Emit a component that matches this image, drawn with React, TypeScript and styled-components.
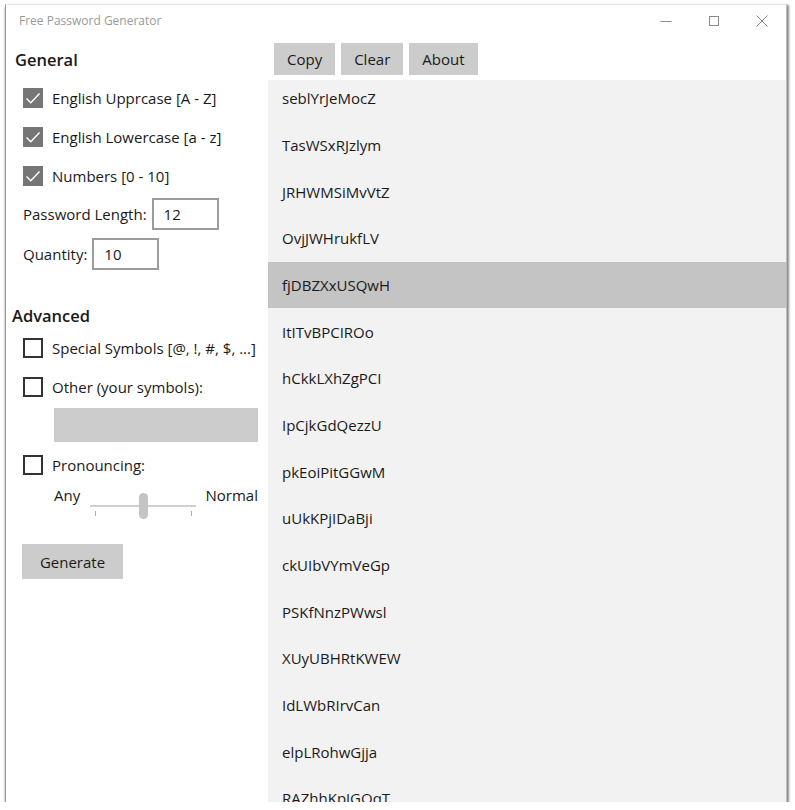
import React from "react";
import styled, { createGlobalStyle } from "styled-components";

const Global = createGlobalStyle`
  html, body { margin: 0; padding: 0; background: #ffffff; }
  body { font-family: "Open Sans", "Noto Sans", Arial, sans-serif; color: #1a1a1a; }
  * { box-sizing: border-box; }
`;

const Window = styled.div`
  margin: 4px 0 0 5px;
  width: 781px;
  height: 798px;
  background: #ffffff;
  border-left: 1px solid #9a9a9a;
  border-top: 1px solid #e6e6e6;
  box-shadow: 1px 0 0 #bdbdbd, 3px 1px 2px rgba(0,0,0,0.45), 0 3px 2px rgba(0,0,0,0.45);
  display: flex;
  flex-direction: column;
  overflow: hidden;
`;

const TitleBar = styled.div`
  height: 31px;
  display: flex;
  align-items: center;
  padding-left: 13px;
  flex-shrink: 0;
`;

const Title = styled.div`
  font-size: 12px;
  color: #9a9a9a;
  flex: 1;
`;

const Controls = styled.div`
  display: flex;
  align-items: center;
`;

const ControlBtn = styled.div`
  width: 48px;
  height: 31px;
  display: flex;
  align-items: center;
  justify-content: center;
`;

const Body = styled.div`
  flex: 1;
  display: flex;
  min-height: 0;
`;

const Left = styled.div`
  width: 262px;
  flex-shrink: 0;
  display: flex;
  flex-direction: column;
  font-size: 15px;
`;

const Heading = styled.div<{ $top: number; $left: number }>`
  margin-top: ${p => p.$top}px;
  margin-left: ${p => p.$left}px;
  height: 24px;
  line-height: 24px;
  font-size: 16.5px;
  font-weight: 600;
  color: #1a1a1a;
`;

const CheckRow = styled.div<{ $top?: number }>`
  margin-top: ${p => p.$top ?? 0}px;
  height: 39px;
  display: flex;
  align-items: center;
  padding-left: 17px;
  gap: 9px;
`;

const Box = styled.div<{ $checked?: boolean }>`
  width: 20px;
  height: 20px;
  flex-shrink: 0;
  background: ${p => (p.$checked ? "#767676" : "#ffffff")};
  border: 2px solid ${p => (p.$checked ? "#767676" : "#333333")};
  display: flex;
  align-items: center;
  justify-content: center;
`;

const Label = styled.span`
  white-space: nowrap;
  color: #1a1a1a;
  line-height: 20px;
`;

const FieldRow = styled.div<{ $top: number }>`
  margin-top: ${p => p.$top}px;
  height: 32px;
  display: flex;
  align-items: center;
  padding-left: 17px;
  gap: 5px;
`;

const NumInput = styled.div`
  width: 67px;
  height: 32px;
  border: 2px solid #9b9b9b;
  padding-left: 10px;
  display: flex;
  align-items: center;
`;

const GrayField = styled.div`
  margin: 2px 0 0 48px;
  width: 204px;
  height: 34px;
  background: #cccccc;
`;

const SliderRow = styled.div`
  margin: 1px 0 0 48px;
  height: 40px;
  display: flex;
  align-items: flex-start;
  width: 204px;
  justify-content: space-between;
`;

const Slider = styled.div`
  position: relative;
  width: 106px;
  height: 32px;
  margin-top: 8px;
`;

const Track = styled.div`
  position: absolute;
  left: 0;
  right: 0;
  top: 12px;
  height: 2px;
  background: #cfcfcf;
`;

const Thumb = styled.div`
  position: absolute;
  left: 49px;
  top: 0;
  width: 9px;
  height: 26px;
  border-radius: 5px;
  background: #c4c4c4;
`;

const Tick = styled.div<{ $left: number }>`
  position: absolute;
  left: ${p => p.$left}px;
  top: 18px;
  width: 1px;
  height: 5px;
  background: #b0b0b0;
`;

const GenerateButton = styled.div`
  margin: 19px 0 0 16px;
  width: 101px;
  height: 35px;
  background: #cccccc;
  display: flex;
  align-items: center;
  justify-content: center;
  font-size: 15px;
`;

const Right = styled.div`
  flex: 1;
  display: flex;
  flex-direction: column;
  min-width: 0;
`;

const Toolbar = styled.div`
  height: 44px;
  display: flex;
  gap: 6px;
  padding: 7px 0 0 6px;
  flex-shrink: 0;
`;

const ToolButton = styled.div`
  height: 32px;
  padding: 0 13px;
  background: #cccccc;
  display: flex;
  align-items: center;
  font-size: 15px;
`;

const List = styled.div`
  flex: 1;
  background: #f2f2f2;
  overflow: hidden;
`;

const ListInner = styled.div`
  margin-top: -5px;
`;

const Item = styled.div<{ $selected?: boolean }>`
  height: 46.67px;
  display: flex;
  align-items: center;
  padding-left: 14px;
  font-size: 15px;
  background: ${p => (p.$selected ? "#c4c4c4" : "transparent")};
  color: #1a1a1a;
`;

const Check = () => (
  <svg width="16" height="16" viewBox="0 0 16 16">
    <path d="M1.5 8.5 L5.8 12.8 L14.5 3.5" fill="none" stroke="#ffffff" strokeWidth="1.4" />
  </svg>
);

const passwords = [
  "seblYrJeMocZ",
  "TasWSxRJzlym",
  "JRHWMSiMvVtZ",
  "OvjJWHrukfLV",
  "fjDBZXxUSQwH",
  "ItITvBPCIROo",
  "hCkkLXhZgPCI",
  "IpCjkGdQezzU",
  "pkEoiPitGGwM",
  "uUkKPjIDaBji",
  "ckUIbVYmVeGp",
  "PSKfNnzPWwsl",
  "XUyUBHRtKWEW",
  "IdLWbRIrvCan",
  "elpLRohwGjja",
  "RAZhhKpJGOqT",
];

export default function App() {
  return (
    <>
      <Global />
      <Window>
        <TitleBar>
          <Title>Free Password Generator</Title>
          <Controls>
            <ControlBtn>
              <svg width="12" height="12" viewBox="0 0 12 12">
                <path d="M0.5 6.5 H11.5" stroke="#8a8a8a" strokeWidth="1" />
              </svg>
            </ControlBtn>
            <ControlBtn>
              <svg width="12" height="12" viewBox="0 0 12 12">
                <rect x="1.5" y="1.5" width="9" height="9" fill="none" stroke="#8a8a8a" strokeWidth="1" />
              </svg>
            </ControlBtn>
            <ControlBtn>
              <svg width="12" height="12" viewBox="0 0 12 12">
                <path d="M0.5 0.5 L11.5 11.5 M11.5 0.5 L0.5 11.5" stroke="#8a8a8a" strokeWidth="1" />
              </svg>
            </ControlBtn>
          </Controls>
        </TitleBar>
        <Body>
          <Left>
            <Heading $top={12} $left={9}>General</Heading>
            <CheckRow $top={6}>
              <Box $checked><Check /></Box>
              <Label>English Upprcase [A - Z]</Label>
            </CheckRow>
            <CheckRow>
              <Box $checked><Check /></Box>
              <Label>English Lowercase [a - z]</Label>
            </CheckRow>
            <CheckRow>
              <Box $checked><Check /></Box>
              <Label>Numbers [0 - 10]</Label>
            </CheckRow>
            <FieldRow $top={3}>
              <Label>Password Length:</Label>
              <NumInput>12</NumInput>
            </FieldRow>
            <FieldRow $top={8}>
              <Label>Quantity:</Label>
              <NumInput>10</NumInput>
            </FieldRow>
            <Heading $top={34} $left={6}>Advanced</Heading>
            <CheckRow $top={0}>
              <Box />
              <Label>Special Symbols [@, !, #, $, ...]</Label>
            </CheckRow>
            <CheckRow>
              <Box />
              <Label>Other (your symbols):</Label>
            </CheckRow>
            <GrayField />
            <CheckRow $top={3}>
              <Box />
              <Label>Pronouncing:</Label>
            </CheckRow>
            <SliderRow>
              <Label>Any</Label>
              <Slider>
                <Track />
                <Tick $left={5} />
                <Tick $left={101} />
                <Thumb />
              </Slider>
              <Label>Normal</Label>
            </SliderRow>
            <GenerateButton>Generate</GenerateButton>
          </Left>
          <Right>
            <Toolbar>
              <ToolButton>Copy</ToolButton>
              <ToolButton>Clear</ToolButton>
              <ToolButton>About</ToolButton>
            </Toolbar>
            <List>
              <ListInner>
                {passwords.map((p, i) => (
                  <Item key={p} $selected={i === 4}>{p}</Item>
                ))}
              </ListInner>
            </List>
          </Right>
        </Body>
      </Window>
    </>
  );
}
